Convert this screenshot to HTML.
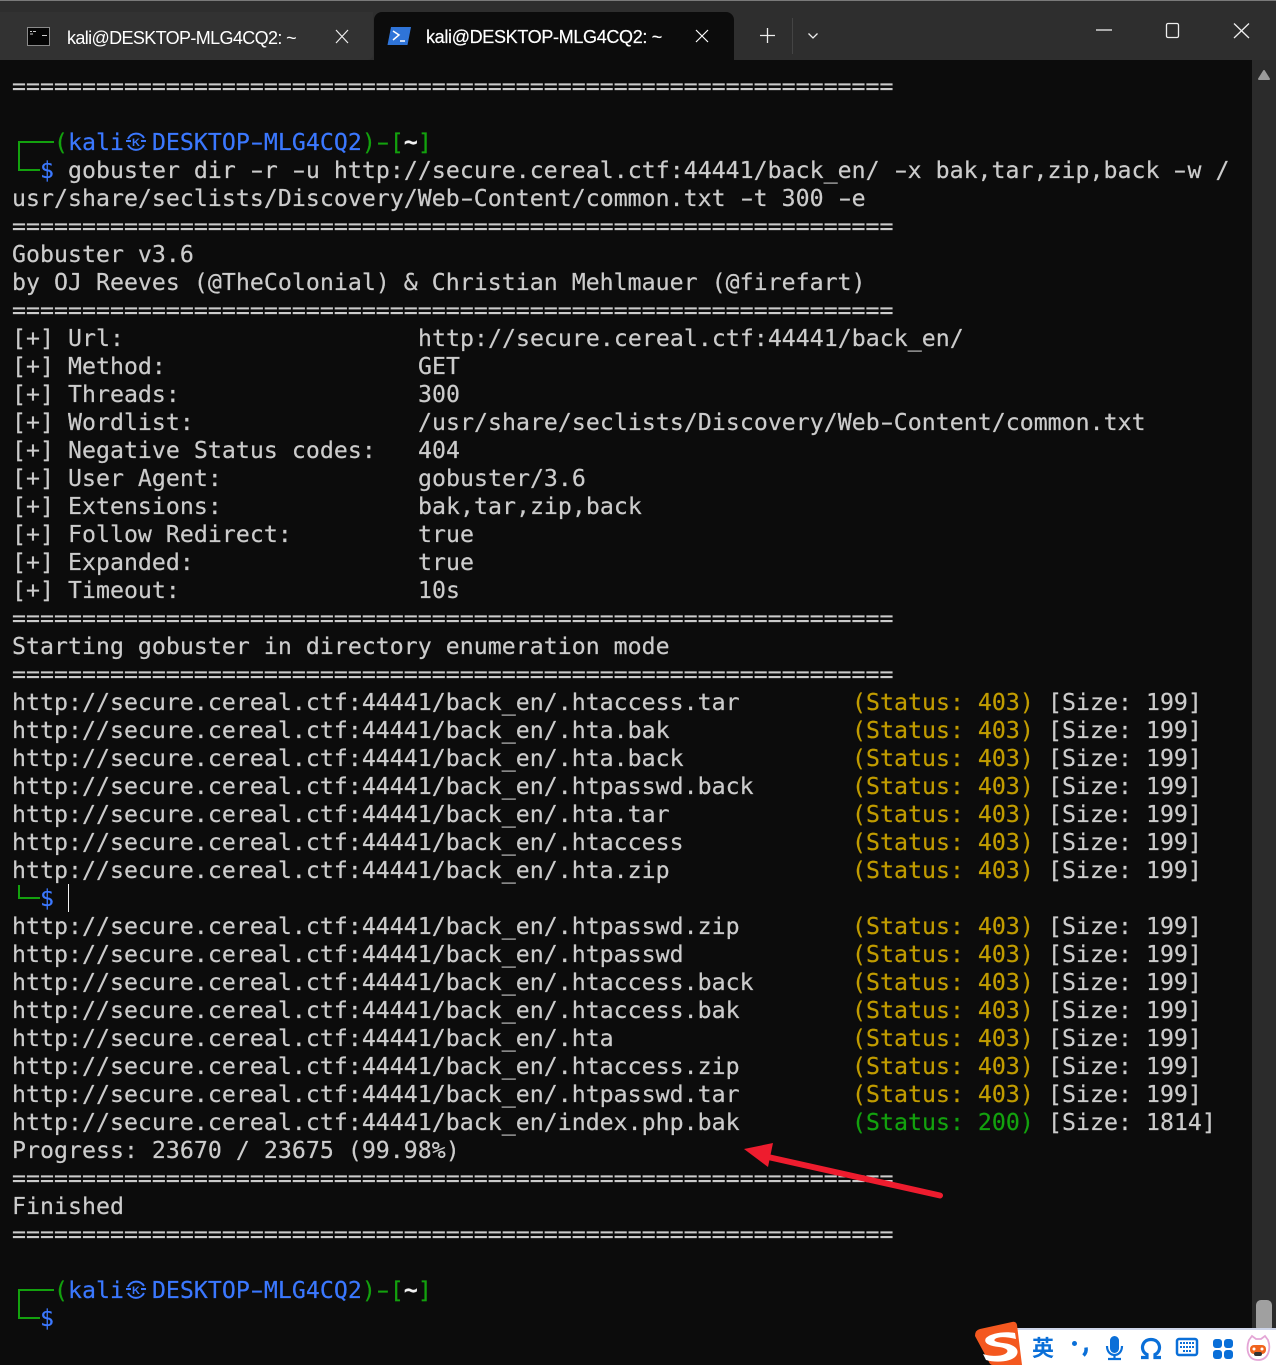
<!DOCTYPE html>
<html><head><meta charset="utf-8"><title>kali@DESKTOP-MLG4CQ2: ~</title>
<style>
html,body{margin:0;padding:0;background:#0c0c0c}
body{position:relative;width:1276px;height:1365px;overflow:hidden}
.abs{position:absolute}
#bar{left:0;top:0;width:1276px;height:60px;background:#2e2e2e;border-top:1px solid #7a7a7a;box-sizing:border-box}
#t1{left:0;top:12px;width:373px;height:48px;background:#323232;border-radius:0 0 6px 0}
#t2{left:374px;top:12px;width:360px;height:48px;background:#0c0c0c;border-radius:8px 8px 0 0}
.tt{font:18px/26px "Liberation Sans",sans-serif;color:#fff;white-space:pre}
#term{left:12px;top:73px;width:1240px;font:23.2px/28px "DejaVu Sans Mono","Liberation Mono",monospace;color:#ccc;letter-spacing:.0325px;-webkit-text-stroke:.2px currentColor}
.l{height:28px;position:relative;white-space:pre}
.v{position:absolute;left:406px}.s{position:absolute;left:840px;color:#c19c00}.z{position:absolute;left:1036px}
.g{color:#13a10e}.b{color:#3b78ff}.w{color:#f2f2f2;font-weight:bold}
.ok{position:absolute;left:840px;color:#13a10e}
.d{display:inline-block;transform:scaleX(1.6)}
#sb{left:1252px;top:60px;width:24px;height:1305px;background:#2b2b2b}
.gl{background:#13a10e;position:absolute}
</style></head><body>
<div id="bar" class="abs"></div>
<div id="t1" class="abs"></div>
<div id="t2" class="abs"></div>
<svg class="abs" style="left:0;top:0" width="1276" height="60" fill="none">
<rect x="27.500" y="27.500" width="22" height="18" fill="#050505" stroke="#8a8a8a"/>
<path d="M30 31.500h2M33 31.500h3M30 34h3M42 35.500h5" stroke="#ccc"/>
<path d="M391 27h20l-3.500 18h-20z" fill="#2f74d8"/>
<path d="M393 31l6 4-6 5M400 41h5" stroke="#fff" stroke-width="1.500"/>
<path d="M336 30l12 13M348 30l-12 13" stroke="#eee" stroke-width="1.200"/>
<path d="M696 30l12 12M708 30l-12 12" stroke="#fff" stroke-width="1.200"/>
<path d="M760 35.500h15M767.500 28v15" stroke="#eee" stroke-width="1.300"/>
<path d="M792.500 18v36" stroke="#444"/>
<path d="M808.500 33.500l4.500 4.500 4.500-4.500" stroke="#eee" stroke-width="1.300"/>
<path d="M1096 30h16" stroke="#eee" stroke-width="1.300"/>
<rect x="1166.500" y="23.500" width="12" height="14" rx="1.500" stroke="#eee" stroke-width="1.300"/>
<path d="M1234 23.500l15 14.500M1249 23.500l-15 14.500" stroke="#eee" stroke-width="1.300"/>
</svg>
<div class="abs tt" style="left:67px;top:25px;letter-spacing:-.63px">kali@DESKTOP-MLG4CQ2: ~</div>
<div class="abs tt" style="left:426px;top:24px;letter-spacing:-.33px;-webkit-text-stroke:.2px #fff">kali@DESKTOP-MLG4CQ2: ~</div>
<div id="sb" class="abs"></div>
<svg class="abs" style="left:1252px;top:60px" width="24" height="30"><path d="M12 11l5 8H7z" fill="#9b9b9b" stroke="#9b9b9b" stroke-width="2" stroke-linejoin="round"/></svg>
<div class="abs" style="left:1256px;top:1300px;width:16px;height:32px;background:#a0a0a0;border-radius:5px"></div>
<div id="term" class="abs">
<div class="l">===============================================================</div>
<div class="l"> </div>
<div class="l">   <span class="g">(</span><span class="b">kali  DESKTOP<span class="d">-</span>MLG4CQ2</span><span class="g">)<span class="d">-</span>[</span><span class="w">~</span><span class="g">]</span></div>
<div class="l">  <span class="b">$</span> gobuster dir <span class="d">-</span>r <span class="d">-</span>u http://secure.cereal.ctf:44441/back_en/ <span class="d">-</span>x bak,tar,zip,back <span class="d">-</span>w /</div>
<div class="l">usr/share/seclists/Discovery/Web<span class="d">-</span>Content/common.txt <span class="d">-</span>t 300 <span class="d">-</span>e</div>
<div class="l">===============================================================</div>
<div class="l">Gobuster v3.6</div>
<div class="l">by OJ Reeves (@TheColonial) &amp; Christian Mehlmauer (@firefart)</div>
<div class="l">===============================================================</div>
<div class="l">[+] Url:<span class="v">http://secure.cereal.ctf:44441/back_en/</span></div>
<div class="l">[+] Method:<span class="v">GET</span></div>
<div class="l">[+] Threads:<span class="v">300</span></div>
<div class="l">[+] Wordlist:<span class="v">/usr/share/seclists/Discovery/Web<span class="d">-</span>Content/common.txt</span></div>
<div class="l">[+] Negative Status codes:<span class="v">404</span></div>
<div class="l">[+] User Agent:<span class="v">gobuster/3.6</span></div>
<div class="l">[+] Extensions:<span class="v">bak,tar,zip,back</span></div>
<div class="l">[+] Follow Redirect:<span class="v">true</span></div>
<div class="l">[+] Expanded:<span class="v">true</span></div>
<div class="l">[+] Timeout:<span class="v">10s</span></div>
<div class="l">===============================================================</div>
<div class="l">Starting gobuster in directory enumeration mode</div>
<div class="l">===============================================================</div>
<div class="l">http://secure.cereal.ctf:44441/back_en/.htaccess.tar<span class="s">(Status: 403)</span><span class="z">[Size: 199]</span></div>
<div class="l">http://secure.cereal.ctf:44441/back_en/.hta.bak<span class="s">(Status: 403)</span><span class="z">[Size: 199]</span></div>
<div class="l">http://secure.cereal.ctf:44441/back_en/.hta.back<span class="s">(Status: 403)</span><span class="z">[Size: 199]</span></div>
<div class="l">http://secure.cereal.ctf:44441/back_en/.htpasswd.back<span class="s">(Status: 403)</span><span class="z">[Size: 199]</span></div>
<div class="l">http://secure.cereal.ctf:44441/back_en/.hta.tar<span class="s">(Status: 403)</span><span class="z">[Size: 199]</span></div>
<div class="l">http://secure.cereal.ctf:44441/back_en/.htaccess<span class="s">(Status: 403)</span><span class="z">[Size: 199]</span></div>
<div class="l">http://secure.cereal.ctf:44441/back_en/.hta.zip<span class="s">(Status: 403)</span><span class="z">[Size: 199]</span></div>
<div class="l">  <span class="b">$</span></div>
<div class="l">http://secure.cereal.ctf:44441/back_en/.htpasswd.zip<span class="s">(Status: 403)</span><span class="z">[Size: 199]</span></div>
<div class="l">http://secure.cereal.ctf:44441/back_en/.htpasswd<span class="s">(Status: 403)</span><span class="z">[Size: 199]</span></div>
<div class="l">http://secure.cereal.ctf:44441/back_en/.htaccess.back<span class="s">(Status: 403)</span><span class="z">[Size: 199]</span></div>
<div class="l">http://secure.cereal.ctf:44441/back_en/.htaccess.bak<span class="s">(Status: 403)</span><span class="z">[Size: 199]</span></div>
<div class="l">http://secure.cereal.ctf:44441/back_en/.hta<span class="s">(Status: 403)</span><span class="z">[Size: 199]</span></div>
<div class="l">http://secure.cereal.ctf:44441/back_en/.htaccess.zip<span class="s">(Status: 403)</span><span class="z">[Size: 199]</span></div>
<div class="l">http://secure.cereal.ctf:44441/back_en/.htpasswd.tar<span class="s">(Status: 403)</span><span class="z">[Size: 199]</span></div>
<div class="l">http://secure.cereal.ctf:44441/back_en/index.php.bak<span class="ok">(Status: 200)</span><span class="z">[Size: 1814]</span></div>
<div class="l">Progress: 23670 / 23675 (99.98%)</div>
<div class="l">===============================================================</div>
<div class="l">Finished</div>
<div class="l">===============================================================</div>
<div class="l"> </div>
<div class="l">   <span class="g">(</span><span class="b">kali  DESKTOP<span class="d">-</span>MLG4CQ2</span><span class="g">)<span class="d">-</span>[</span><span class="w">~</span><span class="g">]</span></div>
<div class="l">  <span class="b">$</span></div>
</div>
<!-- prompt corners -->
<div class="gl" style="left:18px;top:141px;width:36px;height:2px"></div>
<div class="gl" style="left:18px;top:141px;width:2px;height:30px"></div>
<div class="gl" style="left:18px;top:169px;width:22px;height:2px"></div>
<div class="gl" style="left:18px;top:885px;width:2px;height:14px"></div>
<div class="gl" style="left:18px;top:897px;width:22px;height:2px"></div>
<div class="gl" style="left:18px;top:1289px;width:36px;height:2px"></div>
<div class="gl" style="left:18px;top:1289px;width:2px;height:30px"></div>
<div class="gl" style="left:18px;top:1317px;width:22px;height:2px"></div>
<div class="abs" style="left:68px;top:884px;width:1px;height:28px;background:#f2f2f2"></div>
<!-- kali symbol -->
<svg class="abs" style="left:125px;top:130px" width="22" height="24" fill="none"><path d="M3 9A9 9 0 0 1 19 8M19 15A9 9 0 0 1 3 15M1 11h5M16 11h5" stroke="#3b78ff" stroke-width="2"/><text x="11" y="16" text-anchor="middle" font-family="Liberation Sans,sans-serif" font-size="11" font-weight="bold" fill="#3b78ff">K</text></svg>
<svg class="abs" style="left:125px;top:1278px" width="22" height="24" fill="none"><path d="M3 9A9 9 0 0 1 19 8M19 15A9 9 0 0 1 3 15M1 11h5M16 11h5" stroke="#3b78ff" stroke-width="2"/><text x="11" y="16" text-anchor="middle" font-family="Liberation Sans,sans-serif" font-size="11" font-weight="bold" fill="#3b78ff">K</text></svg>
<!-- arrow -->
<svg class="abs" style="left:0;top:0" width="1276" height="1365" fill="none">
<path d="M768 1157L940 1195.500" stroke="#ee1c2e" stroke-width="6" stroke-linecap="round"/>
<path d="M744 1149L773 1143L768 1167Z" fill="#ee1c2e"/>
</svg>
<!-- IME toolbar -->
<div class="abs" style="left:1015px;top:1328px;width:261px;height:37px;background:#fff;border-top:2px solid #cfd6ea;box-sizing:border-box"></div>
<svg class="abs" style="left:0;top:0" width="1276" height="1365" fill="none">
<path d="M980 1329L1012 1322Q1016 1321 1017 1325L1022 1365H993Q990 1365 989 1362L975 1336Q975 1330 980 1329Z" fill="#f4581f"/>
<path d="M1015 1333C1005 1331 991 1333 986 1338C983 1343 989 1346 999 1347C1007 1348 1010 1351 1005 1354C999 1357 989 1356 983 1354L986 1360C996 1363 1011 1362 1016 1356C1021 1349 1013 1344 1003 1343C996 1342 993 1341 995 1339C999 1336 1007 1337 1016 1339Z" fill="#fff"/>
<circle cx="1074.500" cy="1343.500" r="2.500" fill="#0a6fd8"/>
<path d="M1086 1347.500c.5 3-.5 6-2.500 8" stroke="#0a6fd8" stroke-width="3.500"/>
<rect x="1110" y="1336" width="9" height="17" rx="4.500" fill="#0a6fd8"/>
<path d="M1107 1346c0 12 15 12 15 0M1114.500 1355v3M1108 1359h13" stroke="#0a6fd8" stroke-width="2.200"/>
<path d="M1141 1357.500h6v-3c-7-3-6-15 4-15s11 12 4 15v3h6" stroke="#0a6fd8" stroke-width="3.200"/>
<rect x="1177" y="1339" width="20" height="16" rx="2" stroke="#0a6fd8" stroke-width="2.500"/>
<path d="M1180 1343h14M1180 1347h14M1183 1351h8" stroke="#0a6fd8" stroke-width="2" stroke-dasharray="2 1"/>
<rect x="1213" y="1339" width="9" height="9" rx="3" fill="#0a6fd8"/><rect x="1224" y="1339" width="9" height="9" rx="3" fill="#0a6fd8"/>
<rect x="1213" y="1350" width="9" height="9" rx="3" fill="#0a6fd8"/><rect x="1224" y="1350" width="9" height="9" rx="3" fill="#0a6fd8"/>
<path d="M1249 1340l3-4 4 3h5l4-3 3 4c3 8 1 20-10 20s-12-12-9-20z" fill="#fff" stroke="#e4a6d6" stroke-width="1.800"/>
<rect x="1250" y="1345" width="16" height="9" rx="4" fill="#f0641e"/><circle cx="1254" cy="1349" r="1.500" fill="#fff"/><circle cx="1262" cy="1349" r="1.500" fill="#fff"/>
<rect x="1254" y="1352" width="8" height="4" rx="2" fill="#333"/>
</svg>
<div class="abs" style="left:1032px;top:1333px;font:bold 22px/28px 'Noto Sans CJK SC',sans-serif;color:#0a6fd8">英</div>
</body></html>
